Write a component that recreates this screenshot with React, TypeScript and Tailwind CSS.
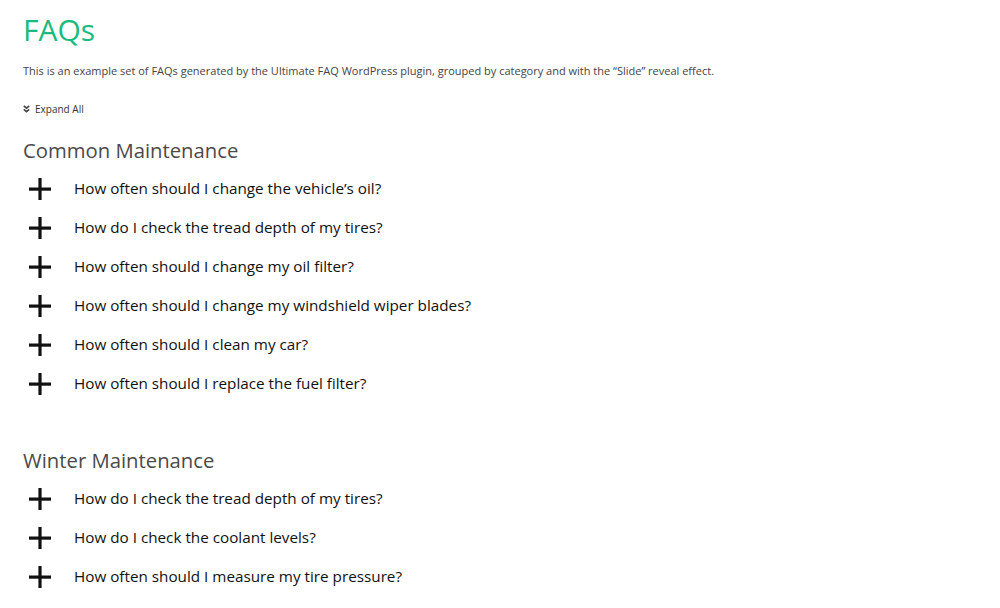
import React from "react";

const common = [
  "How often should I change the vehicle’s oil?",
  "How do I check the tread depth of my tires?",
  "How often should I change my oil filter?",
  "How often should I change my windshield wiper blades?",
  "How often should I clean my car?",
  "How often should I replace the fuel filter?",
];
const winter = [
  "How do I check the tread depth of my tires?",
  "How do I check the coolant levels?",
  "How often should I measure my tire pressure?",
];

function Plus() {
  return (
    <svg width="22" height="22" viewBox="0 0 22 22" className="shrink-0">
      <rect x="0" y="9.5" width="22" height="3.2" fill="#111" />
      <rect x="9.4" y="0" width="3.2" height="22" fill="#111" />
    </svg>
  );
}

function Row({ q }: { q: string }) {
  return (
    <div className="flex items-center h-[39px]">
      <div className="w-[51px] pl-[6px] flex items-center">
        <Plus />
      </div>
      <span className="text-[15.25px] text-[#111]">{q}</span>
    </div>
  );
}

export default function App() {
  return (
    <div
      className="w-[1000px] h-[608px] overflow-hidden bg-white px-[23px] pt-[8px]"
      style={{ fontFamily: '"Open Sans", sans-serif' }}
    >
      <h1 className="text-[30px] leading-[44px] text-[#1cba7c]">FAQs</h1>
      <p className="text-[11px] text-[#444] mt-[11px] leading-[16px]">
        This is an example set of FAQs generated by the Ultimate FAQ WordPress plugin, grouped by category and with the “Slide” reveal effect.
      </p>
      <div className="flex items-center gap-[5px] mt-[23px] text-[10px] text-[#333] leading-[14px]">
        <svg width="7" height="8" viewBox="0 0 7 8">
          <path d="M0.8 0.8 L3.5 3.2 L6.2 0.8" stroke="#444" strokeWidth="1.6" fill="none" />
          <path d="M0.8 4.3 L3.5 6.7 L6.2 4.3" stroke="#444" strokeWidth="1.6" fill="none" />
        </svg>
        <span>Expand All</span>
      </div>
      <h2 className="text-[20.3px] text-[#4a4a4a] mt-[19px] leading-[30px]">Common Maintenance</h2>
      <div className="mt-[4px]">
        {common.map((q, i) => (
          <Row key={i} q={q} />
        ))}
      </div>
      <h2 className="text-[20.3px] text-[#4a4a4a] mt-[42px] leading-[30px]">Winter Maintenance</h2>
      <div className="mt-[4px]">
        {winter.map((q, i) => (
          <Row key={i} q={q} />
        ))}
      </div>
    </div>
  );
}
